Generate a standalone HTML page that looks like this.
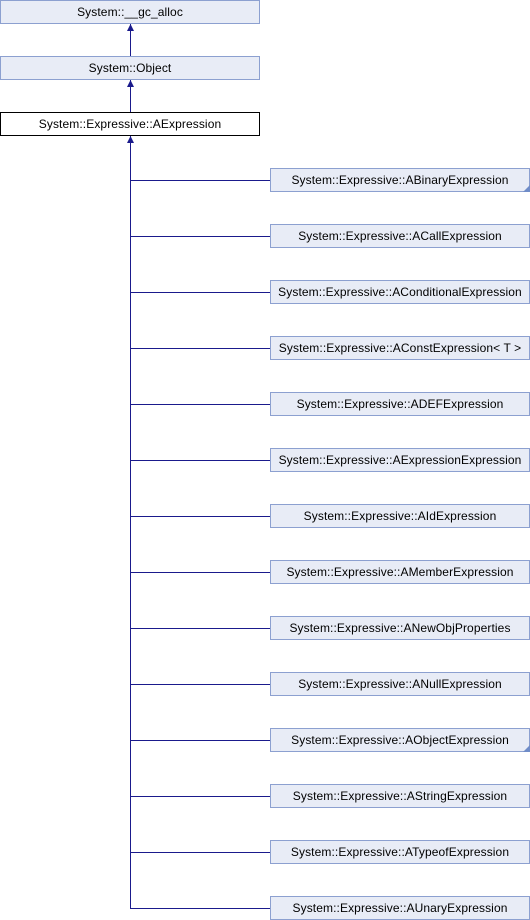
<!DOCTYPE html>
<html><head><style>body{margin:0;background:#fff}svg{display:block}text{font-family:"Liberation Sans",Arial,sans-serif;font-size:12px;letter-spacing:0.1px;fill:#000}</style></head><body>
<svg width="530" height="920" xmlns="http://www.w3.org/2000/svg">
<g stroke="#1a1a8c" stroke-width="1" fill="none">
<line x1="130.5" y1="24" x2="130.5" y2="56"/>
<line x1="130.5" y1="80" x2="130.5" y2="112"/>
<line x1="130.5" y1="136" x2="130.5" y2="908.5"/>
<line x1="130" y1="180.5" x2="270" y2="180.5"/>
<line x1="130" y1="236.5" x2="270" y2="236.5"/>
<line x1="130" y1="292.5" x2="270" y2="292.5"/>
<line x1="130" y1="348.5" x2="270" y2="348.5"/>
<line x1="130" y1="404.5" x2="270" y2="404.5"/>
<line x1="130" y1="460.5" x2="270" y2="460.5"/>
<line x1="130" y1="516.5" x2="270" y2="516.5"/>
<line x1="130" y1="572.5" x2="270" y2="572.5"/>
<line x1="130" y1="628.5" x2="270" y2="628.5"/>
<line x1="130" y1="684.5" x2="270" y2="684.5"/>
<line x1="130" y1="740.5" x2="270" y2="740.5"/>
<line x1="130" y1="796.5" x2="270" y2="796.5"/>
<line x1="130" y1="852.5" x2="270" y2="852.5"/>
<line x1="130" y1="908.5" x2="270" y2="908.5"/>
</g>
<g fill="#1a1a8c">
<polygon points="130.5,24 127,31 134,31"/>
<polygon points="130.5,80 127,87 134,87"/>
<polygon points="130.5,136 127,143 134,143"/>
</g>
<g fill="#e8ecf6" stroke="#8ca0d0">
<rect x="0.5" y="0.5" width="259" height="23"/>
<rect x="0.5" y="56.5" width="259" height="23"/>
</g>
<rect x="0.5" y="112.5" width="259" height="23" fill="#fff" stroke="#000"/>
<g fill="#e8ecf6" stroke="#8ca0d0">
<rect x="270.5" y="168.5" width="259" height="23"/>
<rect x="270.5" y="224.5" width="259" height="23"/>
<rect x="270.5" y="280.5" width="259" height="23"/>
<rect x="270.5" y="336.5" width="259" height="23"/>
<rect x="270.5" y="392.5" width="259" height="23"/>
<rect x="270.5" y="448.5" width="259" height="23"/>
<rect x="270.5" y="504.5" width="259" height="23"/>
<rect x="270.5" y="560.5" width="259" height="23"/>
<rect x="270.5" y="616.5" width="259" height="23"/>
<rect x="270.5" y="672.5" width="259" height="23"/>
<rect x="270.5" y="728.5" width="259" height="23"/>
<rect x="270.5" y="784.5" width="259" height="23"/>
<rect x="270.5" y="840.5" width="259" height="23"/>
<rect x="270.5" y="896.5" width="259" height="23"/>
</g>
<g fill="#6f8cc8">
<polygon points="530,185 530,192 523,192"/>
<polygon points="530,745 530,752 523,752"/>
</g>
<g text-anchor="middle">
<text x="130" y="16">System::__gc_alloc</text>
<text x="130" y="72">System::Object</text>
<text x="130" y="128">System::Expressive::AExpression</text>
<text x="400" y="184">System::Expressive::ABinaryExpression</text>
<text x="400" y="240">System::Expressive::ACallExpression</text>
<text x="400" y="296">System::Expressive::AConditionalExpression</text>
<text x="400" y="352">System::Expressive::AConstExpression&lt; T &gt;</text>
<text x="400" y="408">System::Expressive::ADEFExpression</text>
<text x="400" y="464">System::Expressive::AExpressionExpression</text>
<text x="400" y="520">System::Expressive::AIdExpression</text>
<text x="400" y="576">System::Expressive::AMemberExpression</text>
<text x="400" y="632">System::Expressive::ANewObjProperties</text>
<text x="400" y="688">System::Expressive::ANullExpression</text>
<text x="400" y="744">System::Expressive::AObjectExpression</text>
<text x="400" y="800">System::Expressive::AStringExpression</text>
<text x="400" y="856">System::Expressive::ATypeofExpression</text>
<text x="400" y="912">System::Expressive::AUnaryExpression</text>
</g>
</svg>
</body></html>
